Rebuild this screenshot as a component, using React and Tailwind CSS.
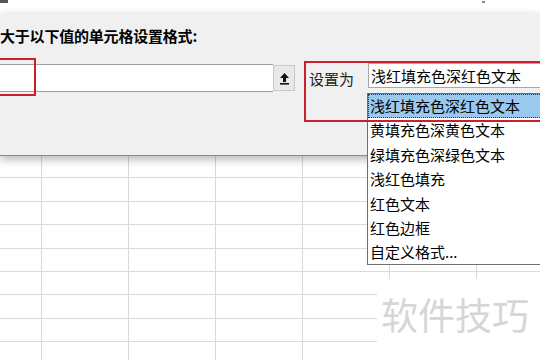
import React from "react";

const options = [
  "浅红填充色深红色文本",
  "黄填充色深黄色文本",
  "绿填充色深绿色文本",
  "浅红色填充",
  "红色文本",
  "红色边框",
  "自定义格式...",
];

const font = {
  fontFamily: '"Microsoft YaHei", "Noto Sans CJK SC", "Noto Sans", sans-serif',
};

const App = () => {
  const rows = Array.from({ length: 9 });
  const cols = [42, 87, 87, 87, 87, 87, 87];

  return (
    <div
      className="relative w-[540px] h-[360px] overflow-hidden bg-white text-black"
      style={font}
    >
      {/* white strip above the dialog */}
      <div className="h-[14px] bg-white relative">
        <div className="absolute left-0 top-0 w-[8px] h-[3px] bg-[#555]" />
        <div className="absolute left-[482px] top-[1px] w-[3px] h-[2px] bg-[#888]" />
      </div>

      {/* dialog */}
      <div className="relative z-10 h-[142px] bg-[#f0f0f0] border-b border-[#8a8a8a] shadow-[0_3px_9px_rgba(0,0,0,0.3)]">
        <div className="pt-[12px] text-[15px] font-bold leading-[20px] tracking-[-0.2px] whitespace-nowrap">
          大于以下值的单元格设置格式:
        </div>
        <div className="flex items-start mt-[18px]">
          <div className="w-[273px] h-[28px] bg-white border-y border-[#a0a0a0]" />
          <button className="w-[22px] h-[26px] mt-[1px] bg-[#e8e8e8] border border-[#c8c8c8] flex items-center justify-center">
            <svg width="11" height="13" viewBox="0 0 11 13">
              <path d="M5.5 1 L10 6 H7 V10 H4 V6 H1 Z" fill="#111" />
              <rect x="1" y="11" width="9" height="1.6" fill="#111" />
            </svg>
          </button>
          <div className="ml-[14px] mt-[6px] text-[15px] leading-[18px] text-[#222]">设置为</div>
          <div className="ml-[14px] -mt-[1px] flex-1 h-[25px] bg-white border border-[#a8a8a8] border-r-0 pl-[2px] text-[15px] leading-[23px] whitespace-nowrap">
            浅红填充色深红色文本
          </div>
        </div>
      </div>

      {/* spreadsheet grid */}
      <div className="relative">
        {rows.map((_, r) => (
          <div
            key={r}
            className="flex h-[23.4px] border-b border-[#dadada] first:h-[22.4px]"
          >
            {cols.map((w, c) => (
              <div
                key={c}
                className="shrink-0 h-full border-r border-[#d8d8d8]"
                style={{ width: w }}
              />
            ))}
          </div>
        ))}
      </div>

      {/* dropdown list */}
      <div className="absolute z-20 left-[367px] top-[93px] w-[190px] h-[172px] bg-white border border-[#6e6e6e] text-[15px] leading-[24.4px] whitespace-nowrap">
        {options.map((o, i) => (
          <div
            key={o}
            className={
              i === 0
                ? "pl-[1px] h-[24.4px] bg-[#99c9ef] border border-dotted border-[#333] leading-[22.4px]"
                : "pl-[2px] h-[24.4px]"
            }
          >
            {o}
          </div>
        ))}
      </div>

      {/* red annotation boxes */}
      <div className="absolute z-30 -left-[4px] top-[58px] w-[40px] h-[38px] border-2 border-[#c8202c]" />
      <div className="absolute z-30 left-[304px] top-[61px] w-[250px] h-[61px] border-2 border-[#c8202c]" />

      {/* watermark */}
      <div className="absolute left-[377px] top-[279px] w-[163px] h-[81px] bg-white">
        <div className="pl-[4px] pt-[14px] text-[37px] leading-[42px] text-[#d6d6d6]">
          软件技巧
        </div>
      </div>
    </div>
  );
};

export default App;
